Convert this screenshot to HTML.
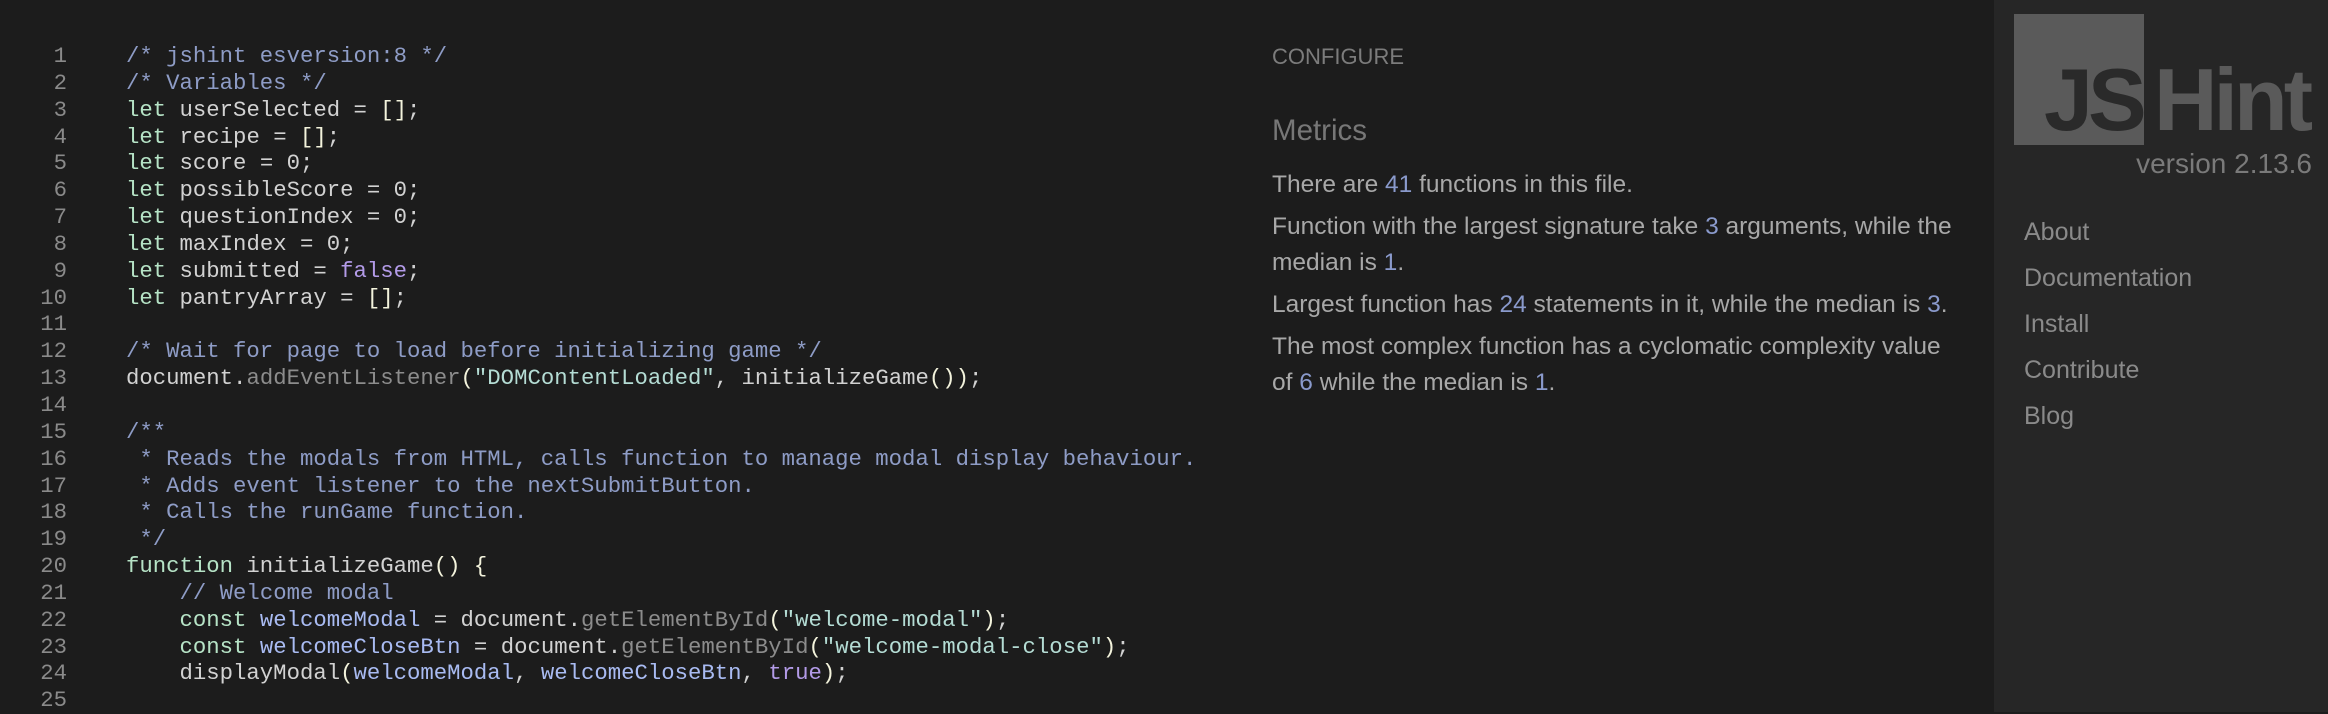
<!DOCTYPE html>
<html><head><meta charset="utf-8"><style>
*{margin:0;padding:0;box-sizing:border-box}
body{width:2328px;height:712px;background:#1c1c1c;position:relative;overflow:hidden;font-family:"Liberation Sans",Arial,sans-serif}
#code{position:absolute;left:0;top:43px;font-family:"Liberation Mono",monospace;font-size:22.3px;line-height:26.85px;white-space:pre;color:#d2d2d2}
#nums{position:absolute;left:0;width:67px;top:43px;text-align:right;font-family:"Liberation Mono",monospace;font-size:22.3px;line-height:26.85px;color:#8a8a8a;white-space:pre}
#src{position:absolute;left:126px;top:0}
.c{color:#8e9cc6}.k{color:#b6e3c6}.b{color:#f3f3dc}.p{color:#b39be8}.s{color:#b4dcd4}.v{color:#a9bbf2}.m{color:#8c8c8c}
#mid{position:absolute;left:1272px;top:0;width:720px;color:#a8a8a8}
.cfg{position:absolute;top:44px;font-size:22px;color:#7c7c7c;white-space:nowrap}
.met{position:absolute;top:114px;font-size:29.5px;color:#777;white-space:nowrap}
.txt{position:absolute;top:167px;font-size:24.5px;line-height:36px;white-space:nowrap}
.txt p{margin-bottom:6px}
.n{color:#8a9acc}
#side{position:absolute;left:1994px;top:0;width:334px;height:712px;background:#262626}
.box{position:absolute;left:20px;top:14px;width:130px;height:131px;background:#5a5a5a}
.js{position:absolute;left:50px;top:50px;font-size:88px;font-weight:bold;color:#2a2a2a;letter-spacing:-5px;line-height:100px}
.hint{position:absolute;left:160px;top:50px;font-size:88px;font-weight:bold;color:#5a5a5a;letter-spacing:-4px;line-height:100px}
.ver{position:absolute;right:16px;top:148px;font-size:28px;color:#7a7a7a}
.nav{position:absolute;left:30px;font-size:25px;color:#8a8a8a}
</style></head><body>
<div id="nums">1
2
3
4
5
6
7
8
9
10
11
12
13
14
15
16
17
18
19
20
21
22
23
24
25</div>
<div id="code"><div id="src"><span class="c">/* jshint esversion:8 */</span>
<span class="c">/* Variables */</span>
<span class="k">let</span> userSelected = <span class="b">[]</span>;
<span class="k">let</span> recipe = <span class="b">[]</span>;
<span class="k">let</span> score = 0;
<span class="k">let</span> possibleScore = 0;
<span class="k">let</span> questionIndex = 0;
<span class="k">let</span> maxIndex = 0;
<span class="k">let</span> submitted = <span class="p">false</span>;
<span class="k">let</span> pantryArray = <span class="b">[]</span>;

<span class="c">/* Wait for page to load before initializing game */</span>
document.<span class="m">addEventListener</span><span class="b">(</span><span class="s">"DOMContentLoaded"</span>, initializeGame<span class="b">())</span>;

<span class="c">/**
 * Reads the modals from HTML, calls function to manage modal display behaviour.
 * Adds event listener to the nextSubmitButton.
 * Calls the runGame function.
 */</span>
<span class="k">function</span> initializeGame<span class="b">()</span> <span class="b">{</span>
    <span class="c">// Welcome modal</span>
    <span class="k">const</span> <span class="v">welcomeModal</span> = document.<span class="m">getElementById</span><span class="b">(</span><span class="s">"welcome-modal"</span><span class="b">)</span>;
    <span class="k">const</span> <span class="v">welcomeCloseBtn</span> = document.<span class="m">getElementById</span><span class="b">(</span><span class="s">"welcome-modal-close"</span><span class="b">)</span>;
    displayModal<span class="b">(</span><span class="v">welcomeModal</span>, <span class="v">welcomeCloseBtn</span>, <span class="p">true</span><span class="b">)</span>;
</div></div>
<div id="mid">
<div class="cfg">CONFIGURE</div>
<div class="met">Metrics</div>
<div class="txt">
<p>There are <span class="n">41</span> functions in this file.</p>
<p>Function with the largest signature take <span class="n">3</span> arguments, while the<br>median is <span class="n">1</span>.</p>
<p>Largest function has <span class="n">24</span> statements in it, while the median is <span class="n">3</span>.</p>
<p>The most complex function has a cyclomatic complexity value<br>of <span class="n">6</span> while the median is <span class="n">1</span>.</p>
</div>
</div>
<div id="side">
<div class="box"></div>
<div class="js">JS</div>
<div class="hint">Hint</div>
<div class="ver">version 2.13.6</div>
<div class="nav" style="top:218px">About</div>
<div class="nav" style="top:264px">Documentation</div>
<div class="nav" style="top:310px">Install</div>
<div class="nav" style="top:356px">Contribute</div>
<div class="nav" style="top:402px">Blog</div>
</div>
</body></html>
